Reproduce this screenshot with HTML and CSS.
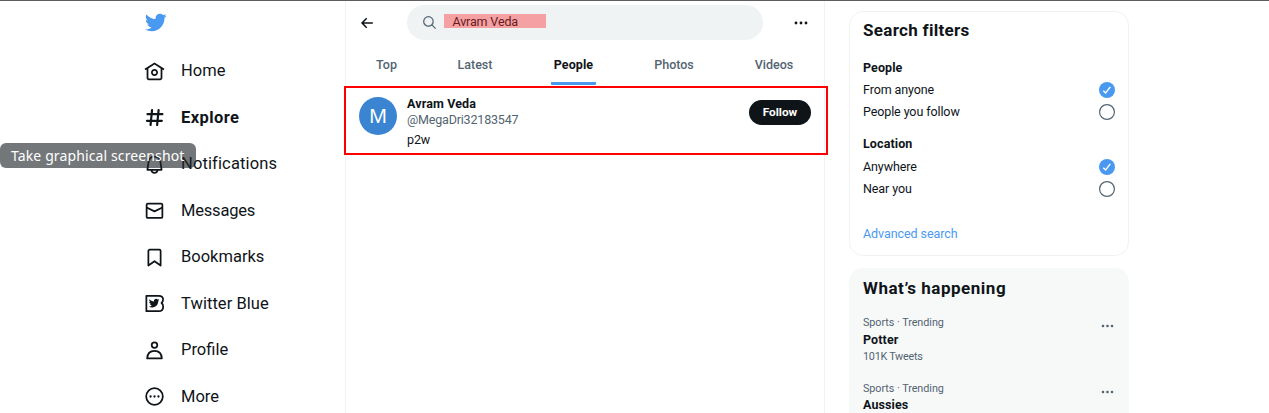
FILE: index.html
```html
<!DOCTYPE html>
<html lang="en">
<head>
<meta charset="utf-8">
<title>Avram Veda - Search</title>
<link rel="stylesheet" href="styles.css">
</head>
<body>
<div class="page">
  <nav class="sidebar">
    <svg class="bird" viewBox="0 0 24 24"><path d="M23.643 4.937c-.835.37-1.732.62-2.675.733.962-.576 1.7-1.49 2.048-2.578-.9.534-1.897.922-2.958 1.13-.85-.904-2.06-1.47-3.4-1.47-2.572 0-4.658 2.086-4.658 4.66 0 .364.042.718.12 1.06-3.873-.195-7.304-2.05-9.602-4.868-.4.69-.63 1.49-.63 2.342 0 1.616.823 3.043 2.072 3.878-.764-.025-1.482-.234-2.11-.583v.06c0 2.257 1.605 4.14 3.737 4.568-.392.106-.803.162-1.227.162-.3 0-.593-.028-.877-.082.593 1.85 2.313 3.198 4.352 3.234-1.595 1.25-3.604 1.995-5.786 1.995-.376 0-.747-.022-1.112-.065 2.062 1.323 4.51 2.093 7.14 2.093 8.57 0 13.255-7.098 13.255-13.254 0-.2-.005-.402-.014-.602.91-.658 1.7-1.477 2.323-2.41z"/></svg>
    <a class="nav-item"><svg class="icon" viewBox="0 0 24 24"><path d="M12 9c-2.209 0-4 1.791-4 4s1.791 4 4 4 4-1.791 4-4-1.791-4-4-4zm0 6c-1.105 0-2-.895-2-2s.895-2 2-2 2 .895 2 2-.895 2-2 2zm0-13.304L.622 8.807l1.06 1.696L3 9.679V19.5C3 20.881 4.119 22 5.5 22h13c1.381 0 2.5-1.119 2.5-2.5V9.679l1.318.824 1.06-1.696L12 1.696zM19 19.5c0 .276-.224.5-.5.5h-13c-.276 0-.5-.224-.5-.5V8.429l7-4.375 7 4.375V19.5z"/></svg><span class="home">Home</span></a>
    <a class="nav-item active"><svg class="icon line bold" viewBox="0 0 24 24"><path d="M9.200 3.400 7.500 20.600M16.700 3.400 15 20.600M4 8.200H21M3.400 15.800H20.400"/></svg><span class="explore">Explore</span></a>
    <a class="nav-item"><svg class="icon line" viewBox="0 0 24 24"><path d="M5.100 10C5.500 6 8 3 12 3s6.500 3 6.900 7l1.200 8H3.900zM8.300 18c.3 2.300 1.700 3.700 3.700 3.700s3.400-1.400 3.700-3.700"/></svg><span class="notifications">Notifications</span></a>
    <a class="nav-item"><svg class="icon line" viewBox="0 0 24 24"><rect x="3" y="4" width="18" height="16.500" rx="1.500"/><path d="m3 8.500 9 4.500 9-4.500"/></svg><span class="messages">Messages</span></a>
    <a class="nav-item"><svg class="icon line" viewBox="0 0 24 24"><path d="M5 4.500C5 3.700 5.700 3 6.500 3h11c.8 0 1.500.7 1.500 1.500v16.700l-7-5-7 5z"/></svg><span class="bookmarks">Bookmarks</span></a>
    <a class="nav-item"><svg class="icon" viewBox="0 0 24 24"><path class="stroke" d="M2.700 3.300h14.200c3 0 4.900 1.800 4.900 4.200 0 1.800-.7 3.100-1.800 3.900 1.200.9 1.900 2.300 1.900 4.200 0 3-2 5.200-5.100 5.200H2.700z"/><path transform="translate(5 5.200) scale(.53)" d="M23.643 4.937c-.835.37-1.732.62-2.675.733.962-.576 1.700-1.490 2.048-2.578-.9.534-1.897.922-2.958 1.130-.85-.904-2.060-1.470-3.400-1.470-2.572 0-4.658 2.086-4.658 4.660 0 .364.042.718.12 1.060-3.873-.195-7.304-2.050-9.602-4.868-.4.690-.63 1.490-.63 2.342 0 1.616.823 3.043 2.072 3.878-.764-.025-1.482-.234-2.110-.583v.06c0 2.257 1.605 4.140 3.737 4.568-.392.106-.803.162-1.227.162-.3 0-.593-.028-.877-.082.593 1.850 2.313 3.198 4.352 3.234-1.595 1.250-3.604 1.995-5.786 1.995-.376 0-.747-.022-1.112-.065 2.062 1.323 4.510 2.093 7.140 2.093 8.570 0 13.255-7.098 13.255-13.254 0-.2-.005-.402-.014-.602.91-.658 1.700-1.477 2.323-2.410z"/></svg><span class="blue">Twitter Blue</span></a>
    <a class="nav-item"><svg class="icon line" viewBox="0 0 24 24"><circle cx="12" cy="5.800" r="3.200"/><path d="M3.600 21c.3-5 3.200-8.500 8.400-8.500s8.100 3.500 8.400 8.500z"/></svg><span class="profile">Profile</span></a>
    <a class="nav-item"><svg class="icon" viewBox="0 0 24 24"><circle class="stroke" cx="12" cy="12" r="9.500"/><circle cx="7.500" cy="12" r="1.300"/><circle cx="12" cy="12" r="1.300"/><circle cx="16.500" cy="12" r="1.300"/></svg><span class="more">More</span></a>
  </nav>

  <main class="timeline">
    <header class="topbar">
      <svg class="back" viewBox="0 0 24 24"><path d="m11.500 4-8 8 8 8M3.800 12H22"/></svg>
      <div class="search">
        <svg class="lens" viewBox="0 0 24 24"><circle cx="10.300" cy="10.300" r="7.600"/><path d="m15.800 15.800 6 6"/></svg>
        <span class="query"><span class="query-text">Avram Veda</span></span>
      </div>
      <svg class="dots dark" viewBox="0 0 14 4"><circle cx="2" cy="2" r="1.400"/><circle cx="7" cy="2" r="1.400"/><circle cx="12" cy="2" r="1.400"/></svg>
    </header>
    <div class="tabs">
      <span class="tab t-top">Top</span><span class="tab t-latest">Latest</span><span class="tab t-people selected">People</span><span class="tab t-photos">Photos</span><span class="tab t-videos">Videos</span>
    </div>
    <section class="result">
      <div class="avatar">M</div>
      <div class="person">
        <div class="name">Avram Veda</div>
        <div class="handle">@MegaDri32183547</div>
        <div class="bio">p2w</div>
      </div>
      <button class="follow">Follow</button>
    </section>
  </main>

  <aside class="aside">
    <section class="filters">
      <h2 class="title-filters">Search filters</h2>
      <h3 class="g-people">People</h3>
      <div class="option"><span class="o-anyone">From anyone</span><svg class="radio on" viewBox="0 0 16 16"><circle cx="8" cy="8" r="8"/><path d="m4.300 8.800 2.300 2.200 4.700-6.200"/></svg></div>
      <div class="option"><span class="o-follow">People you follow</span><svg class="radio" viewBox="0 0 16 16"><circle cx="8" cy="8" r="7.400"/></svg></div>
      <h3 class="g-location">Location</h3>
      <div class="option"><span class="o-anywhere">Anywhere</span><svg class="radio on" viewBox="0 0 16 16"><circle cx="8" cy="8" r="8"/><path d="m4.300 8.800 2.300 2.200 4.700-6.200"/></svg></div>
      <div class="option"><span class="o-near">Near you</span><svg class="radio" viewBox="0 0 16 16"><circle cx="8" cy="8" r="7.400"/></svg></div>
      <a class="advanced">Advanced search</a>
    </section>
    <section class="happening">
      <h2 class="title-happening">What’s happening</h2>
      <article class="trend">
        <div><div class="meta">Sports · Trending</div><div class="topic potter">Potter</div><div class="meta count">101K Tweets</div></div>
        <svg class="dots" viewBox="0 0 14 4"><circle cx="2" cy="2" r="1.300"/><circle cx="6.500" cy="2" r="1.300"/><circle cx="11" cy="2" r="1.300"/></svg>
      </article>
      <article class="trend">
        <div><div class="meta">Sports · Trending</div><div class="topic aussies">Aussies</div></div>
        <svg class="dots" viewBox="0 0 14 4"><circle cx="2" cy="2" r="1.300"/><circle cx="6.500" cy="2" r="1.300"/><circle cx="11" cy="2" r="1.300"/></svg>
      </article>
    </section>
  </aside>
</div>
<div class="tooltip">Take graphical screenshot</div>
</body>
</html>
```
FILE: styles.css
```css
* { box-sizing: border-box; }
body { margin: 0; background: #fff; color: #0f1419; font-family: Roboto, "Liberation Sans", sans-serif; font-size: 12.5px; overflow: hidden; }
h2, h3 { margin: 0; }
.page { display: flex; height: 413px; border-top: 1px solid #5f5d60; overflow: hidden; }

.sidebar { width: 345px; flex: none; padding: 10px 0 0 144px; }
.bird { display: block; width: 23px; height: 23px; fill: #4a99f0; margin-bottom: 14px; }
.nav-item { display: flex; align-items: center; height: 46.5px; gap: 16px; font-size: 16.5px; line-height: 20px; white-space: nowrap; }
.icon { width: 21px; height: 21px; fill: #0f1419; flex: none; }
.line, .stroke { fill: none; stroke: #0f1419; stroke-width: 2; stroke-linejoin: round; }
.bold { stroke-width: 2.5; stroke-linecap: round; }
.active { font-weight: 700; }
.explore { letter-spacing: .4px; }
.notifications { letter-spacing: .13px; }
.messages { letter-spacing: -.2px; }
.blue { letter-spacing: .05px; }

.timeline { width: 480px; flex: none; border-left: 1px solid #eff3f4; border-right: 1px solid #eff3f4; }
.topbar { display: flex; align-items: center; height: 43px; padding-left: 14px; }
.back { width: 14px; height: 14px; fill: none; stroke: #0f1419; stroke-width: 2.6; }
.search { display: flex; align-items: center; width: 356px; height: 35px; margin-left: 33px; padding-left: 15px; border-radius: 18px; background: #eff3f4; }
.lens { width: 15px; height: 15px; fill: none; stroke: #536471; stroke-width: 2; }
.query { width: 102px; height: 14px; margin: -4px 0 0 7px; padding-left: 8.5px; line-height: 16px; letter-spacing: -.15px; background: #f5a0a2; color: #681b20; }
.dots { width: 14px; height: 4px; fill: #536471; flex: none; }
.dark { fill: #0f1419; margin-left: 31px; }
.tabs { display: flex; height: 42px; color: #536471; font-weight: 500; }
.tab { display: flex; justify-content: center; line-height: 42px; flex: none; }
.t-top { width: 81px; }
.t-latest { width: 96px; }
.t-people { width: 45px; margin: 0 28px; }
.t-photos { width: 100px; }
.t-videos { width: 100px; }
.selected { height: 41px; color: #0f1419; font-weight: 700; letter-spacing: .1px; border-bottom: 3px solid #4a99f0; border-radius: 1px; }
.result { display: flex; width: 484px; height: 69px; margin: 0 0 0 -2px; border: 2px solid #f00; padding: 8px 15px 0 13px; position: relative; }
.avatar { width: 38px; height: 38px; border-radius: 50%; margin-top: 1px; background: #3a84d2; color: #fff; font-size: 20px; font-family: "Noto Sans", sans-serif; line-height: 38px; text-align: center; }
.person { flex: 1; margin-left: 10px; }
.name { font-weight: 700; line-height: 16px; letter-spacing: .13px; }
.handle { color: #536471; line-height: 16px; letter-spacing: -.18px; }
.bio { line-height: 16px; margin-top: 4px; letter-spacing: -.1px; }
.follow { width: 62px; height: 25px; margin-top: 4px; padding: 0 0 1px; border: 0; border-radius: 13px; background: #0f1419; color: #fff; font: 700 11.8px Roboto, sans-serif; }

.aside { width: 280px; margin-left: 24px; padding-top: 10px; flex: none; }
.filters { height: 245px; border: 1px solid #eff3f4; border-radius: 14px; padding: 7px 13px; }
h2 { font-size: 17px; line-height: 22px; font-weight: 700; }
h3 { font-size: 12.5px; line-height: 16px; letter-spacing: .1px; }
.title-filters { letter-spacing: .3px; }
.title-happening { letter-spacing: .52px; }
.g-people { margin: 19px 0 3px; }
.g-location { margin: 13px 0 4px; }
.option { display: flex; justify-content: space-between; align-items: center; height: 22px; letter-spacing: -.1px; }
.option span { margin-top: -2px; }
.radio { width: 16px; height: 16px; fill: none; stroke: #536471; stroke-width: 1.2; }
.on circle { fill: #4a99f0; stroke: none; }
.on path { stroke: #fff; stroke-width: 1.4; }
.advanced { display: block; margin-top: 26px; line-height: 16px; letter-spacing: -.07px; color: #4a99f0; }
.happening { height: 180px; margin-top: 12px; padding: 9px 14px; border-radius: 14px; background: #f7f9f9; }
.trend { display: flex; justify-content: space-between; margin-top: 16px; height: 50px; }
.trend .dots { margin-top: 9px; }
.meta { color: #536471; font-size: 10.8px; line-height: 15px; letter-spacing: -.05px; }
.topic { font-weight: 700; line-height: 18px; letter-spacing: .1px; }
.potter { padding-top: 1px; }
.count { line-height: 16px; letter-spacing: -.25px; }

.tooltip { position: absolute; left: 0; top: 143px; width: 196px; height: 25px; padding-left: 11px; border-radius: 6px; background: rgba(30, 36, 40, .62); color: #fff; font: 14px/26px "Noto Sans", sans-serif; letter-spacing: .12px; white-space: nowrap; }
```
